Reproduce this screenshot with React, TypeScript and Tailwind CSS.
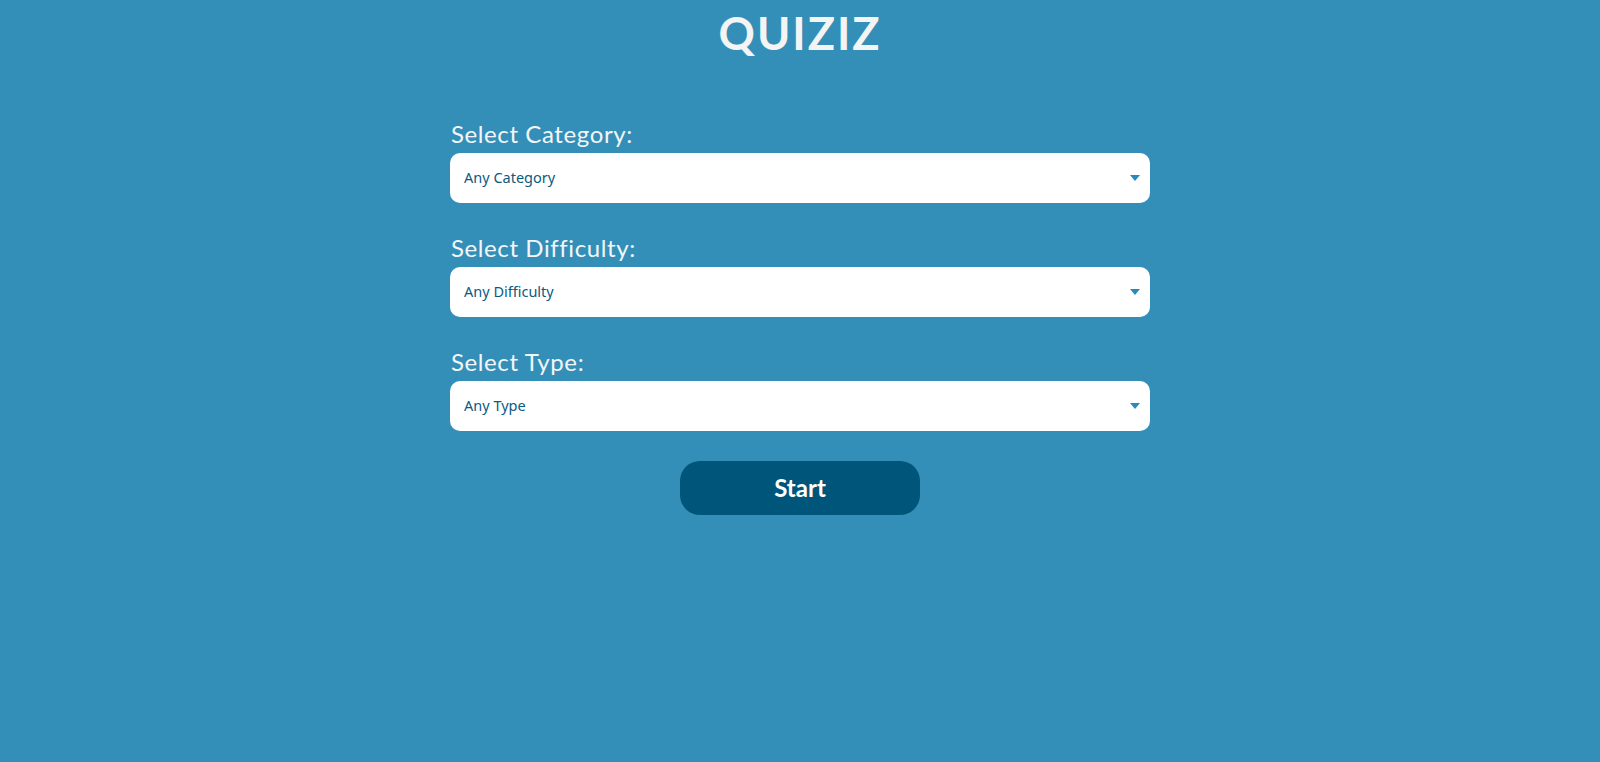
import React from "react";

function Arrow() {
  return (
    <svg width="10" height="6" viewBox="0 0 10 6" className="shrink-0">
      <path d="M0 0 L10 0 L5 6 Z" fill="#2a88bd" />
    </svg>
  );
}

function Field({ label, value }: { label: string; value: string }) {
  return (
    <div className="flex flex-col">
      <label className="text-[24px] leading-[29px] text-[#f3f6f8] mb-[5px] pl-px tracking-[0.6px]" style={{ fontFamily: "Lato, 'Open Sans', sans-serif" }}>
        {label}
      </label>
      <div className="h-[50px] bg-white rounded-[10px] flex items-center justify-between pl-[14px] pr-[10px]">
        <span className="text-[14.5px] text-[#0b5a80]" style={{ fontFamily: "'Noto Sans', 'Open Sans', sans-serif" }}>
          {value}
        </span>
        <Arrow />
      </div>
    </div>
  );
}

export default function App() {
  return (
    <div className="min-h-screen w-full bg-[#338fb8] flex flex-col items-center" style={{ fontFamily: "Lato, 'Open Sans', sans-serif" }}>
      <h1 className="mt-[6px] text-[45px] leading-[54px] font-bold text-[#f4f4f4] tracking-[2px]">QUIZIZ</h1>
      <div className="w-[700px] mt-[59px] flex flex-col gap-[30px]">
        <Field label="Select Category:" value="Any Category" />
        <Field label="Select Difficulty:" value="Any Difficulty" />
        <Field label="Select Type:" value="Any Type" />
      </div>
      <button className="mt-[30px] w-[240px] h-[54px] rounded-[20px] bg-[#00567a] text-white text-[24px] font-bold">
        Start
      </button>
    </div>
  );
}
